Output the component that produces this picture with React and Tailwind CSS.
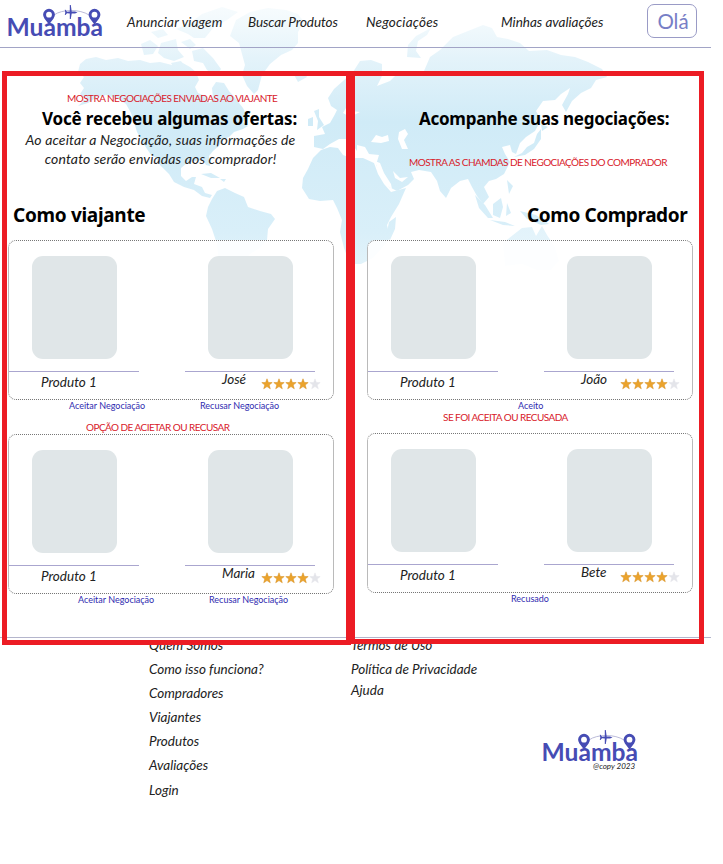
const LATO = "font-['Lato',sans-serif] whitespace-nowrap";
const SCRIPT = LATO + " italic text-[#222]";
const NOTE = "font-['Lato',sans-serif] whitespace-nowrap text-[#d8202a] text-[10px] tracking-[-0.55px] h-3 leading-3";
const HEAD = "font-['Noto_Sans',sans-serif] whitespace-nowrap font-bold text-black";
const LINK = "font-['Lato',sans-serif] whitespace-nowrap text-[#2f2bb0] text-[9px] h-3 leading-3";

function Logo() {
  return (
    <svg width="104" height="42" viewBox="0 0 104 42" className="block shrink-0">
      <text x="6.5" y="36" textLength="96.5" lengthAdjust="spacingAndGlyphs" fontFamily="Lato, sans-serif" fontWeight="700" fontSize="25" fill="#464cb4">Muamba</text>
      <path d="M54 15C62 9 80 9 89 15" fill="none" stroke="#a9a9cf" strokeWidth="0.8" />
      {[49, 94.5].map((x) => (
        <g key={x} transform={`translate(${x} 15)`}>
          <path d="M0 9.5L-4.6 3.4A5.9 5.9 0 1 1 4.6 3.4Z" fill="#464cb4" />
          <circle r="2.9" cy="-0.3" fill="#fff" />
        </g>
      ))}
      <path d="M77.5 12.5L75 11.5L71.7 11.5L70.8 5L69.8 5L69.8 11.5L67 11.7L65.5 9.8L64.8 9.8L65.3 12.5L64.8 15L65.5 15L67 13.3L69.8 13.5L69.8 19L70.8 19L71.7 13.5L75 13.5Z" fill="#464cb4" />
    </svg>
  );
}

function WorldMap() {
  return (
    <svg width="723" height="290" viewBox="0 0 723 290" className="absolute left-0 top-0">
      <defs>
        <linearGradient id="sea" x1="0" y1="0" x2="0" y2="290" gradientUnits="userSpaceOnUse">
          <stop offset="0" stopColor="#eef8fc" stopOpacity="0.4" />
          <stop offset="0.2" stopColor="#e4f3fa" />
          <stop offset="0.42" stopColor="#d0ebf7" />
          <stop offset="0.8" stopColor="#d9eff9" />
          <stop offset="0.92" stopColor="#e2f3fa" />
        </linearGradient>
      </defs>
      <g fill="url(#sea)">
        <path d="M80 64L86 59L96 57L106 60L118 58L128 61L140 60L150 63L160 62L172 65L181 62L190 67L196 72L199 80L195 87L198 93L205 96L209 103L213 98L212 88L216 82L224 83L229 91L236 99L243 108L247 116L243 122L248 126L243 129L234 132L229 137L222 140L219 146L213 151L209 156L210 166L206 165L203 160L195 161L187 163L181 168L181 176L186 181L192 177L196 177L194 184L202 187L205 193L212 195L210 198L202 196L194 190L184 187L174 182L169 174L160 165L156 158L151 155L147 149L143 143L137 132L134 122L131 113L126 104L118 99L106 95L97 97L88 103L78 106L86 99L80 94L84 88L80 83L84 77L78 72Z" />
        <path d="M141 44L150 40L158 46L153 54L144 55ZM161 43L176 39L178 50L184 57L174 61L164 58L158 53ZM181 42L190 39L196 45L190 49ZM192 51L203 48L213 58L221 69L216 76L207 70L203 63L194 61ZM151 32L163 29L168 35L158 38ZM176 29L190 23L202 14L222 7L238 12L227 20L213 28L205 38L194 38L188 34ZM171 63L181 61L185 67L175 70Z" />
        <path d="M236 20L250 12L268 8L286 10L298 14L304 22L298 32L298 43L292 50L281 55L270 64L262 75L258 90L254 94L247 86L242 75L245 65L242 54L239 43L230 36Z" />
        <path d="M201 174L211 173L220 178L211 178ZM220 179L226 179L224 182Z" />
        <path d="M217 191L225 188L235 193L244 197L248 207L260 211L271 214L275 219L268 229L267 240L260 248L250 254L242 264L232 276L224 278L219 264L217 244L212 229L206 216L208 207L212 199Z" />
        <path d="M293 73L303 71L307 77L298 82ZM314 111L319 109L319 117L324 125L317 130L318 121ZM308 119L313 117L313 126L308 126Z" />
        <path d="M321 150L330 147L338 148L343 155L351 158L363 158L374 163L378 174L384 184L391 192L406 188L399 204L391 217L387 225L390 238L382 248L373 258L361 264L350 264L344 248L340 232L342 220L337 208L333 200L320 201L309 199L302 188L303 178L308 169L313 158Z" />
        <path d="M314 136L325 134L322 127L330 123L334 116L337 110L331 106L328 98L334 89L343 81L353 72L360 61L371 60L382 64L382 76L377 86L390 81L397 74L412 74L424 71L430 57L440 50L453 37L468 31L483 25L492 28L497 37L508 39L520 43L529 51L547 50L561 55L575 57L588 62L602 69L607 77L596 80L591 88L581 93L572 101L566 112L562 105L568 94L570 88L561 94L555 100L543 101L536 111L541 120L535 131L526 137L520 143L516 154L512 152L510 145L502 147L505 154L510 162L504 174L496 179L489 181L484 187L489 197L483 204L477 196L472 187L468 179L460 181L451 188L446 198L440 191L437 181L431 172L419 170L411 172L414 179L408 185L397 191L389 187L383 176L376 165L379 155L369 154L365 147L357 145L357 151L352 144L346 139L339 139L330 144L323 149L314 147Z" />
        <path d="M407 57L408 45L416 36L431 28L427 35L418 41L416 51L421 58ZM514 157L522 153L527 147L534 143L537 134L541 129L541 139L534 149L525 155ZM541 124L548 127L542 131ZM475 195L485 205L493 218L488 218L479 208ZM493 204L501 198L503 207L500 218L493 215ZM490 220L505 222L515 226L503 225ZM507 203L511 213L506 216ZM507 180L513 186L509 194ZM520 211L536 215L549 224L541 225L527 219ZM389 222L396 217L395 229L390 240L386 237Z" />
        <path d="M503 243L513 235L522 228L532 227L536 236L542 226L547 235L555 247L559 261L551 270L536 270L522 264L505 266Z" opacity="0.75" />
      </g>
      <g fill="#fff">
        <path d="M371 142L376 135L382 137L388 135L389 141L381 143ZM399 132L405 129L408 134L404 140L408 149L402 149L398 139ZM375 161L380 163L384 173L391 184L392 189L386 185L378 171ZM393 171L400 178L408 177L402 182L395 178ZM343 113L349 103L353 95L349 103L351 111L360 112L350 117Z" />
      </g>
    </svg>
  );
}

function Stars() {
  return (
    <svg width="60" height="12" viewBox="0 0 60 12" className="block">
      {[0, 1, 2, 3, 4].map((i) => (
        <path key={i} transform={`translate(${i * 12} 0)`} d="M6 0.8L7.4 4.5L11.2 4.6L8.2 7L9.3 10.8L6 8.6L2.7 10.8L3.8 7L0.8 4.6L4.6 4.5Z" fill={i < 4 ? "#eba32c" : "#e4e5ea"} stroke={i < 4 ? "#d58c1d" : "#e4e5ea"} strokeWidth="0.5" />
      ))}
    </svg>
  );
}

function Card({ name }) {
  return (
    <div className="w-[326px] h-[160px] shrink-0 rounded-[8px] border border-dotted border-[#777] bg-white/90 flex gap-[46px]">
      <div className="w-[130px] pt-[15px]">
        <div className="ml-[23px] w-[85px] h-[103px] rounded-[11px] bg-[#e0e6e8]" />
        <div className="mt-3 h-px bg-[#aaa6cf]" />
        <div className={SCRIPT + " pl-8 h-5 leading-[21px] text-[13.5px]"}>Produto 1</div>
      </div>
      <div className="w-[130px] pt-[15px]">
        <div className="ml-[23px] w-[85px] h-[103px] rounded-[11px] bg-[#e0e6e8]" />
        <div className="mt-3 h-px bg-[#aaa6cf]" />
        <div className="flex">
          <div className={SCRIPT + " w-[76px] shrink-0 pl-[37px] h-4 leading-[15px] text-[13.5px]"}>{name}</div>
          <div className="pt-1.5"><Stars /></div>
        </div>
      </div>
    </div>
  );
}

export default function App() {
  return (
    <div className="relative w-[723px] h-[864px] overflow-hidden bg-white">
      <WorldMap />
      <header className="relative w-[711px] h-12 border-b border-[#a2a4c6] flex items-start">
        <Logo />
        <nav className={SCRIPT + " flex text-[13.5px] leading-5 pt-3 pl-[23px] grow"}>
          <span className="w-[121px] tracking-[0.15px]">Anunciar viagem</span>
          <span className="w-[118px] tracking-[-0.1px]">Buscar Produtos</span>
          <span className="w-[135px] tracking-[0.2px]">Negociações</span>
          <span>Minhas avaliações</span>
        </nav>
        <div className={LATO + " mt-1 mr-3.5 w-[50px] h-[34px] rounded-[7px] border border-[#9a9bc6] bg-white/60 pl-0.5 text-center text-[20.5px] leading-[33px] text-[#777ec6]"}>Olá</div>
      </header>

      <main className="relative z-10 mt-[23px] ml-0.5 flex items-start">
        <section className="w-[349px] h-[574px] shrink-0 border-5 border-[#ec1c24] pt-4">
          <div className={NOTE + " pl-[60px]"}>MOSTRA NEGOCIAÇÕES ENVIADAS AO VIAJANTE</div>
          <h1 className={HEAD + " pl-[35px] text-[17px] tracking-[-0.17px] h-7 leading-[29px]"}>Você recebeu algumas ofertas:</h1>
          <p className={SCRIPT + " w-[307px] text-center text-[14px] tracking-[0.13px] leading-[19px] -mt-0.5"}>
            Ao aceitar a Negociação, suas informações de<br />contato serão enviadas aos comprador!
          </p>
          <h2 className={HEAD + " pl-1.5 mt-[33px] text-[19px] tracking-[-0.3px] h-[29px] leading-7"}>Como viajante</h2>
          <div className="mt-2.5 pl-px"><Card name="José" /></div>
          <div className="flex">
            <span className={LINK + " pl-[62px] w-[193px]"}>Aceitar Negociação</span>
            <span className={LINK}>Recusar Negociação</span>
          </div>
          <div className={NOTE + " mt-[9px] pl-[79px]"}>OPÇÃO DE ACIETAR OU RECUSAR</div>
          <div className="mt-px pl-px"><Card name="Maria" /></div>
          <div className="flex">
            <span className={LINK + " pl-[71px] w-[202px]"}>Aceitar Negociação</span>
            <span className={LINK}>Recusar Negociação</span>
          </div>
        </section>
        <section className="-ml-px w-[354px] h-[573px] shrink-0 border-5 border-[#ec1c24] pt-7">
          <h1 className={HEAD + " pl-[64px] text-[17px] tracking-[-0.27px] h-7 leading-[29px]"}>Acompanhe suas negociações:</h1>
          <div className={NOTE + " mt-6 pl-[54px]"}>MOSTRA AS CHAMDAS DE NEGOCIAÇÕES DO COMPRADOR</div>
          <h2 className={HEAD + " pl-[172px] mt-[33px] text-[19px] tracking-[-0.4px] h-7 leading-7"}>Como Comprador</h2>
          <div className="mt-[11px] pl-3"><Card name="João" /></div>
          <div className={LINK + " pl-[163px]"}>Aceito</div>
          <div className={NOTE + " -mt-px pl-[88px]"}>SE FOI ACEITA OU RECUSADA</div>
          <div className="mt-2.5 pl-3"><Card name="Bete" /></div>
          <div className={LINK + " pl-[156px]"}>Recusado</div>
        </section>
      </main>

      <footer className="w-[711px] -mt-2 border-t border-[#b4b5cc] flex items-start">
        <ul className={SCRIPT + " ml-[149px] w-[202px] -mt-[5px] text-[13.5px] leading-[24.1px]"}>
          <li>Quem Somos</li>
          <li>Como isso funciona?</li>
          <li>Compradores</li>
          <li>Viajantes</li>
          <li>Produtos</li>
          <li>Avaliações</li>
          <li>Login</li>
        </ul>
        <ul className={SCRIPT + " w-[184px] -mt-[5px] text-[13.5px] leading-[24.1px]"}>
          <li>Termos de Uso</li>
          <li>Política de Privacidade</li>
          <li className="-mt-[3px]">Ajuda</li>
        </ul>
        <div className="mt-[87px]">
          <Logo />
          <div className={SCRIPT + " -mt-1.5 pl-[58px] text-[8px] leading-[10px]"}>@copy 2023</div>
        </div>
      </footer>
    </div>
  );
}
